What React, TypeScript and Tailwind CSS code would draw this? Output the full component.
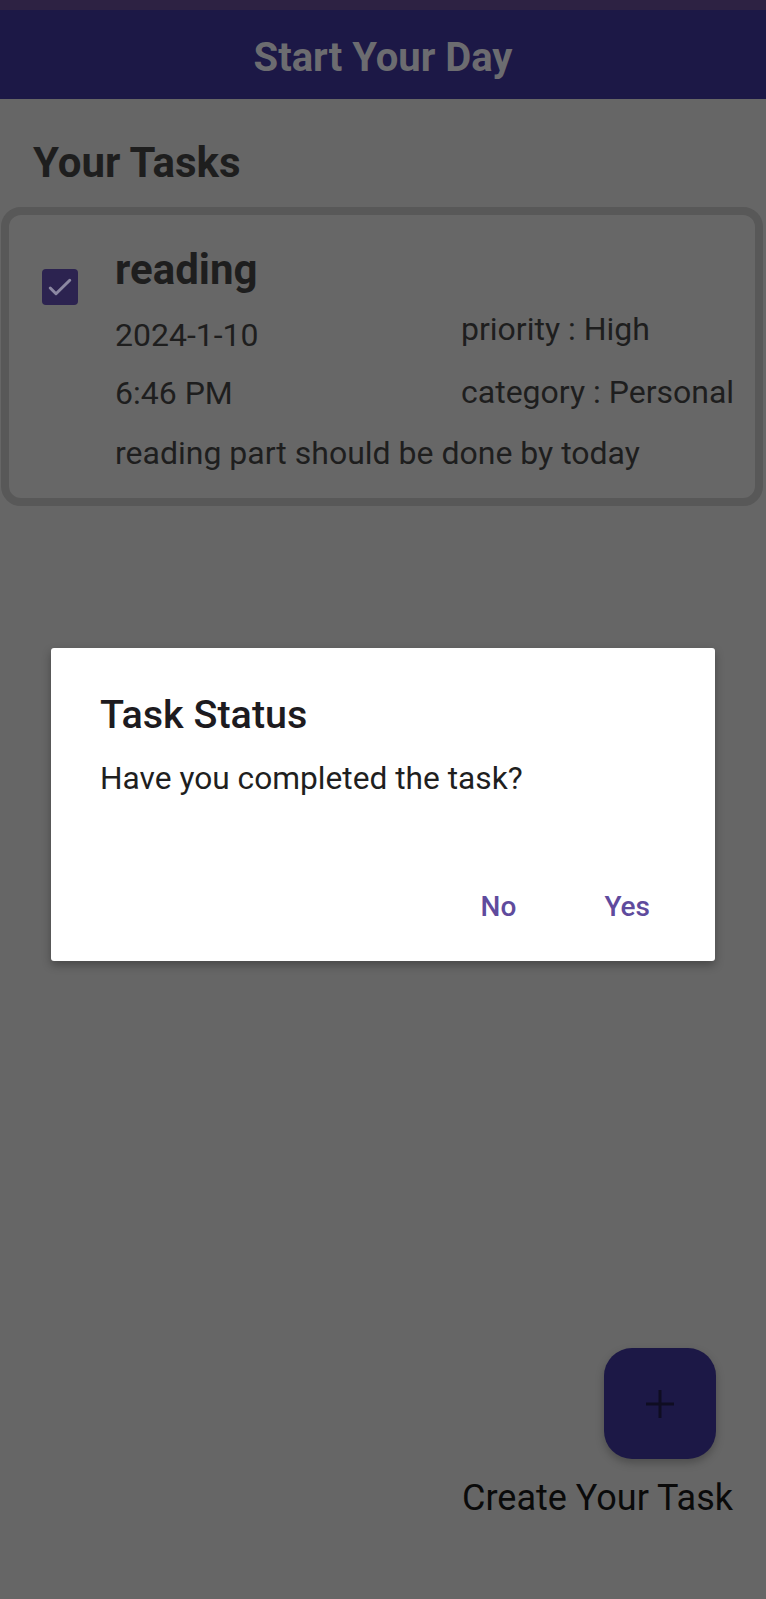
import React from "react";

export default function App() {
  const font = { fontFamily: "Roboto, 'Noto Sans', sans-serif" };
  return (
    <div
      className="relative w-[766px] h-[1599px] bg-[#666666] flex flex-col overflow-hidden"
      style={font}
    >
      {/* status bar */}
      <div className="h-[10px] bg-[#2d2243]" />
      {/* header */}
      <div className="h-[89px] bg-[#1c1846] flex items-center justify-center pt-[6px]">
        <span className="text-[40px] leading-none font-bold text-[#6c6c70]">
          Start Your Day
        </span>
      </div>

      {/* section title */}
      <div className="pl-[33px] pt-[43px]">
        <span className="text-[42px] leading-none font-bold text-[#1e1e1e]">Your Tasks</span>
      </div>

      {/* task card */}
      <div className="mt-[23px] ml-[1px] mr-[3px] h-[299px] border-[8px] border-[#585858] rounded-[20px] bg-[#676767] flex items-start pt-[34px] pl-[33px]">
        <div className="mt-[20px] w-[36px] h-[36px] rounded-[4px] bg-[#2c2350] flex items-center justify-center shrink-0">
          <svg width="30" height="30" viewBox="0 0 24 24" fill="none">
            <path
              d="M4.2 12.8l4.6 4.6L19.8 6.6"
              stroke="#8c88a2"
              strokeWidth="2.4"
              strokeLinecap="round"
              strokeLinejoin="round"
            />
          </svg>
        </div>
        <div className="ml-[37px] flex flex-col text-[#1e1e1e]">
          <div className="text-[42px] leading-none font-bold">reading</div>
          <div className="mt-[22px] flex items-start">
            <div className="w-[346px] mt-[6px] text-[32px] leading-none">2024-1-10</div>
            <div className="text-[32px] leading-none">priority : High</div>
          </div>
          <div className="mt-[25px] flex items-start">
            <div className="w-[346px] mt-[1px] text-[32px] leading-none">6:46 PM</div>
            <div className="text-[32px] leading-none">category : Personal</div>
          </div>
          <div className="mt-[28px] text-[32px] leading-none">reading part should be done by today</div>
        </div>
      </div>

      <div className="flex-1" />

      {/* FAB */}
      <div className="flex flex-col items-end pb-[83px]">
        <div className="mr-[50px] w-[112px] h-[111px] rounded-[28px] bg-[#1c1846] shadow-[0_4px_8px_rgba(0,0,0,0.25)] flex items-center justify-center">
          <svg width="32" height="32" viewBox="0 0 32 32" fill="none">
            <path d="M16 2v28M2 16h28" stroke="#0f0d22" strokeWidth="3" />
          </svg>
        </div>
        <div className="mr-[33px] mt-[21px] text-[36px] leading-none text-[#0a0a0a]">
          Create Your Task
        </div>
      </div>

      {/* dialog */}
      <div className="absolute left-[51px] top-[648px] w-[664px] h-[313px] bg-white rounded-[3px] shadow-[0_4px_10px_rgba(0,0,0,0.3)] flex flex-col pt-[47px] pl-[49px]">
        <div className="text-[39.5px] leading-none font-medium text-[#1d1b20]">Task Status</div>
        <div className="mt-[28px] text-[31.7px] leading-none text-[#1f1f1f]">
          Have you completed the task?
        </div>
        <div className="mt-[99px] flex justify-end gap-[88px] pr-[65px] text-[28px] leading-none font-medium text-[#5f4b9d]">
          <span>No</span>
          <span>Yes</span>
        </div>
      </div>
    </div>
  );
}
